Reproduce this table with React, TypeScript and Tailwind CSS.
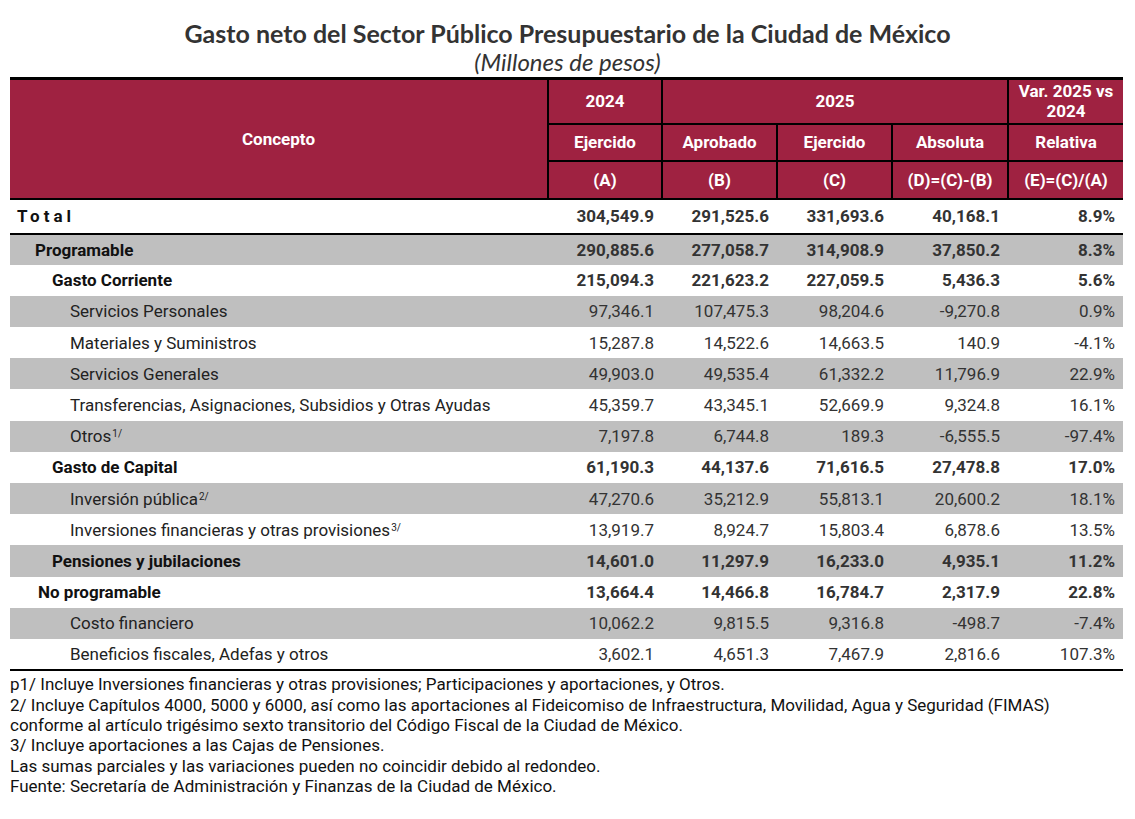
import React from "react";

type Row = {
  label: string;
  sup?: string;
  level: "total" | "l1" | "l2" | "l3";
  bold?: boolean;
  gray?: boolean;
  values: string[];
};

const rows: Row[] = [
  { label: "Programable", level: "l1", bold: true, gray: true, values: ["290,885.6", "277,058.7", "314,908.9", "37,850.2", "8.3%"] },
  { label: "Gasto Corriente", level: "l2", bold: true, values: ["215,094.3", "221,623.2", "227,059.5", "5,436.3", "5.6%"] },
  { label: "Servicios Personales", level: "l3", gray: true, values: ["97,346.1", "107,475.3", "98,204.6", "-9,270.8", "0.9%"] },
  { label: "Materiales y Suministros", level: "l3", values: ["15,287.8", "14,522.6", "14,663.5", "140.9", "-4.1%"] },
  { label: "Servicios Generales", level: "l3", gray: true, values: ["49,903.0", "49,535.4", "61,332.2", "11,796.9", "22.9%"] },
  { label: "Transferencias, Asignaciones, Subsidios y Otras Ayudas", level: "l3", values: ["45,359.7", "43,345.1", "52,669.9", "9,324.8", "16.1%"] },
  { label: "Otros", sup: "1/", level: "l3", gray: true, values: ["7,197.8", "6,744.8", "189.3", "-6,555.5", "-97.4%"] },
  { label: "Gasto de Capital", level: "l2", bold: true, values: ["61,190.3", "44,137.6", "71,616.5", "27,478.8", "17.0%"] },
  { label: "Inversión pública", sup: "2/", level: "l3", gray: true, values: ["47,270.6", "35,212.9", "55,813.1", "20,600.2", "18.1%"] },
  { label: "Inversiones financieras y otras provisiones", sup: "3/", level: "l3", values: ["13,919.7", "8,924.7", "15,803.4", "6,878.6", "13.5%"] },
  { label: "Pensiones y jubilaciones", level: "l2", bold: true, gray: true, values: ["14,601.0", "11,297.9", "16,233.0", "4,935.1", "11.2%"] },
  { label: "No programable", level: "l1", bold: true, values: ["13,664.4", "14,466.8", "16,784.7", "2,317.9", "22.8%"] },
  { label: "Costo financiero", level: "l3", gray: true, values: ["10,062.2", "9,815.5", "9,316.8", "-498.7", "-7.4%"] },
  { label: "Beneficios fiscales, Adefas y otros", level: "l3", values: ["3,602.1", "4,651.3", "7,467.9", "2,816.6", "107.3%"] },
];

const indent: Record<Row["level"], string> = {
  total: "pl-[7px]",
  l1: "pl-[25px]",
  l2: "pl-[42px]",
  l3: "pl-[60px]",
};

const th = "border-2 border-black bg-[#9f2241] text-white font-bold text-center text-[17px] leading-[20px]";

export default function App() {
  return (
    <div className="w-[1135px] h-[819px] bg-white text-[#333] font-['Roboto',sans-serif]">
      <div className="pt-[18px] text-center">
        <h1 className="text-[25px] leading-[30px] font-bold text-[#333] font-['Lato',sans-serif]">
          Gasto neto del Sector Público Presupuestario de la Ciudad de México
        </h1>
        <p className="text-[24px] leading-[28px] italic text-[#333] font-['Lato',sans-serif]">(Millones de pesos)</p>
      </div>

      <table className="ml-[10px] mt-[1px] w-[1113px] border-collapse table-fixed">
        <colgroup>
          <col className="w-[538px]" />
          <col className="w-[114px]" />
          <col className="w-[115px]" />
          <col className="w-[115px]" />
          <col className="w-[116px]" />
          <col className="w-[115px]" />
        </colgroup>
        <thead>
          <tr className="h-[45px] border-t-[3px] border-black">
            <th rowSpan={3} className={th + " border-l-0"}>Concepto</th>
            <th className={th}>2024</th>
            <th colSpan={3} className={th}>2025</th>
            <th className={th + " border-r-0"}>
              Var. 2025 vs
              <br />
              2024
            </th>
          </tr>
          <tr className="h-[37px]">
            <th className={th}>Ejercido</th>
            <th className={th}>Aprobado</th>
            <th className={th}>Ejercido</th>
            <th className={th}>Absoluta</th>
            <th className={th + " border-r-0"}>Relativa</th>
          </tr>
          <tr className="h-[38px]">
            <th className={th}>(A)</th>
            <th className={th}>(B)</th>
            <th className={th}>(C)</th>
            <th className={th}>(D)=(C)-(B)</th>
            <th className={th + " border-r-0"}>(E)=(C)/(A)</th>
          </tr>
        </thead>
        <tbody className="text-[17px] leading-[20px]">
          <tr className="h-[35px] border-b-2 border-black">
            <td className={indent.total + " font-bold tracking-[4px] text-[#111]"}>Total</td>
            {["304,549.9", "291,525.6", "331,693.6", "40,168.1", "8.9%"].map((v, i) => (
              <td key={i} className="text-right pr-[8px] font-bold">{v}</td>
            ))}
          </tr>
          {rows.map((r, idx) => (
            <tr
              key={r.label}
              className={`h-[31.2px] ${r.gray ? "bg-[#bfbfbf]" : "bg-white"} ${
                idx === rows.length - 1 ? "border-b-2 border-black" : ""
              }`}
            >
              <td className={`${r.label === "No programable" ? "pl-[28px]" : indent[r.level]} ${r.bold ? "font-bold text-[#111]" : "text-[#222]"}`}>
                {r.label}
                {r.sup && <sup className="text-[10px] ml-[1px]">{r.sup}</sup>}
              </td>
              {r.values.map((v, i) => (
                <td key={i} className={`text-right pr-[8px] ${r.bold ? "font-bold" : ""}`}>
                  {v}
                </td>
              ))}
            </tr>
          ))}
        </tbody>
      </table>

      <div className="ml-[10px] mt-[3px] text-[17px] leading-[20.4px] text-[#111]">
        <p>p1/ Incluye Inversiones financieras y otras provisiones; Participaciones y aportaciones, y Otros.</p>
        <p>2/ Incluye Capítulos 4000, 5000 y 6000, así como las aportaciones al Fideicomiso de Infraestructura, Movilidad, Agua y Seguridad (FIMAS)</p>
        <p>conforme al artículo trigésimo sexto transitorio del Código Fiscal de la Ciudad de México.</p>
        <p>3/ Incluye aportaciones a las Cajas de Pensiones.</p>
        <p>Las sumas parciales y las variaciones pueden no coincidir debido al redondeo.</p>
        <p>Fuente: Secretaría de Administración y Finanzas de la Ciudad de México.</p>
      </div>
    </div>
  );
}
